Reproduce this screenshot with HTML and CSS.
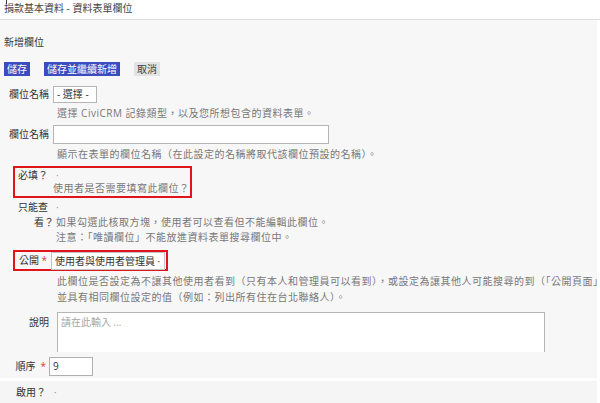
FILE: index.html
```html
<!DOCTYPE html>
<html lang="zh-Hant">
<head>
<meta charset="utf-8">
<title>資料表單欄位</title>
<link rel="stylesheet" href="styles.css">
</head>
<body>
<div class="top"><span class="caret"></span>捐款基本資料 - 資料表單欄位</div>
<div class="panel">
  <div class="heading">新增欄位</div>
  <div class="buttons">
    <span class="btn btn-primary">儲存</span>
    <span class="btn btn-primary">儲存並繼續新增</span>
    <span class="btn btn-cancel">取消</span>
  </div>

  <div class="row r-type">
    <div class="lab">欄位名稱</div>
    <div class="select sel-type"><span>- 選擇 -</span></div>
  </div>
  <div class="help h-type">選擇 CiviCRM 記錄類型，以及您所想包含的資料表單。</div>

  <div class="row r-name">
    <div class="lab">欄位名稱</div>
    <div class="input inp-name"></div>
  </div>
  <div class="help h-name">顯示在表單的欄位名稱（在此設定的名稱將取代該欄位預設的名稱）。</div>

  <div class="mark mark-req">
    <div class="req-label">必填？<span class="dot">·</span></div>
    <div class="help h-req">使用者是否需要填寫此欄位？</div>
  </div>

  <div class="ro">
    <div class="ro-line1">只能查<span class="dot">·</span></div>
    <div class="ro-line2">
      <div class="ro-lab">看？</div>
      <div class="help h-ro">如果勾選此核取方塊，使用者可以查看但不能編輯此欄位。<br>注意：「唯讀欄位」不能放進資料表單搜尋欄位中。</div>
    </div>
  </div>

  <div class="mark mark-vis">
    <div class="vis-lab">公開 <span class="star">*</span></div>
    <div class="select sel-vis"><span>使用者與使用者管理員 ·</span></div>
  </div>
  <div class="help h-vis">此欄位是否設定為不讓其他使用者看到（只有本人和管理員可以看到），或設定為讓其他人可能搜尋的到（「公開頁面」<br>並具有相同欄位設定的值（例如：列出所有住在台北聯絡人）。</div>

  <div class="row r-desc">
    <div class="lab lab-desc">說明</div>
    <div class="textarea"><span class="ph">請在此輸入 ...</span></div>
  </div>

  <div class="row r-order">
    <div class="lab lab-order">順序<span class="star">*</span></div>
    <div class="input inp-order">9</div>
  </div>
</div>
<div class="panel panel-last">
  <div class="active">啟用？<span class="dot">·</span></div>
</div>
</body>
</html>
```

FILE: styles.css
```css
html, body {
  margin: 0;
  padding: 0;
  background: #ffffff;
}
body {
  width: 600px;
  height: 403px;
  overflow: hidden;
  font-family: "Open Sans", "Noto Sans CJK TC", sans-serif;
  font-size: 10px;
  color: #333333;
}
.top {
  position: relative;
  height: 19px;
  line-height: 16px;
  padding-left: 4px;
  border-bottom: 1px solid #dcdcdc;
  color: #444444;
  background: #ffffff;
}
.caret {
  position: absolute;
  left: 6px;
  top: 0;
  width: 1px;
  height: 4px;
  background: #333;
}
.panel {
  width: 593px;
  padding: 0 0 0 4px;
  background: #f7f7f7;
  overflow: hidden;
  height: 358px;
}
.panel-last {
  margin-top: 3px;
  height: 23px;
  background: #f5f5f5;
}
.heading {
  margin-top: 15px;
  line-height: 14px;
  color: #333;
}
.buttons {
  display: flex;
  gap: 14px;
  margin-top: 13px;
}
.btn {
  display: block;
  height: 14px;
  line-height: 14px;
  padding: 0 3px;
}
.btn-primary {
  background: #3b4cbf;
  color: #ffffff;
}
.btn-cancel {
  background: #e3e3e3;
  color: #444;
}
.row {
  display: flex;
  align-items: flex-start;
}
.lab {
  width: 45px;
  padding-right: 4px;
  text-align: right;
  line-height: 16px;
  white-space: nowrap;
}
.select, .input, .textarea {
  box-sizing: border-box;
  background: #ffffff;
  border: 1px solid #b5b5b5;
  overflow: hidden;
  white-space: nowrap;
}
.select span {
  padding-left: 3px;
  line-height: 15px;
}
.r-type {
  margin-top: 10px;
}
.sel-type {
  width: 44px;
  height: 17px;
  line-height: 15px;
}
.help {
  color: #777777;
  line-height: 14px;
  white-space: nowrap;
  letter-spacing: 0.5px;
}
.h-type {
  margin-top: 3px;
  padding-left: 53px;
}
.r-name {
  margin-top: 5px;
}
.r-name .lab {
  line-height: 18px;
}
.inp-name {
  width: 276px;
  height: 19px;
}
.h-name {
  margin-top: 3px;
  padding-left: 53px;
}
.mark {
  box-sizing: border-box;
  margin-left: 9px;
  border: 2px solid #e0141b;
}
.mark-req {
  width: 179px;
  margin-top: 5px;
  padding: 1px 0 1px 3px;
}
.req-label {
  line-height: 13px;
}
.dot {
  color: #999;
  margin-left: 8px;
}
.h-req {
  line-height: 13px;
  padding-left: 35px;
}
.ro {
  margin-top: 2px;
  padding-left: 14px;
  line-height: 15px;
}
.ro-line2 {
  display: flex;
  align-items: flex-start;
}
.ro-lab {
  width: 36px;
  text-align: right;
  padding-right: 2px;
}
.h-ro {
  line-height: 15px;
}
.mark-vis {
  display: flex;
  align-items: flex-start;
  width: 155px;
  height: 21px;
  margin-top: 5px;
  padding-left: 4px;
}
.vis-lab {
  width: 32px;
  line-height: 17px;
}
.star {
  color: #e03a3a;
  margin-left: 5px;
}
.vis-lab .star {
  margin-left: 0;
}
.sel-vis {
  width: 114px;
  height: 18px;
  line-height: 16px;
  border-color: #c4c4c4;
}
.h-vis {
  margin-top: 2px;
  padding-left: 53px;
  line-height: 16px;
}
.r-desc {
  margin-top: 7px;
  height: 40px;
  overflow: hidden;
}
.lab-desc {
  padding-right: 8px;
  padding-top: 2px;
}
.textarea {
  width: 488px;
  height: 60px;
  padding: 1px 3px;
  line-height: 16px;
}
.ph {
  color: #a6a6a6;
}
.r-order {
  margin-top: 5px;
}
.lab-order {
  width: 42px;
  padding-right: 3px;
  line-height: 18px;
}
.inp-order {
  width: 44px;
  height: 19px;
  line-height: 17px;
  padding-left: 3px;
  border-color: #b0b0b0;
}
.active {
  padding-left: 12px;
  line-height: 23px;
}
```
